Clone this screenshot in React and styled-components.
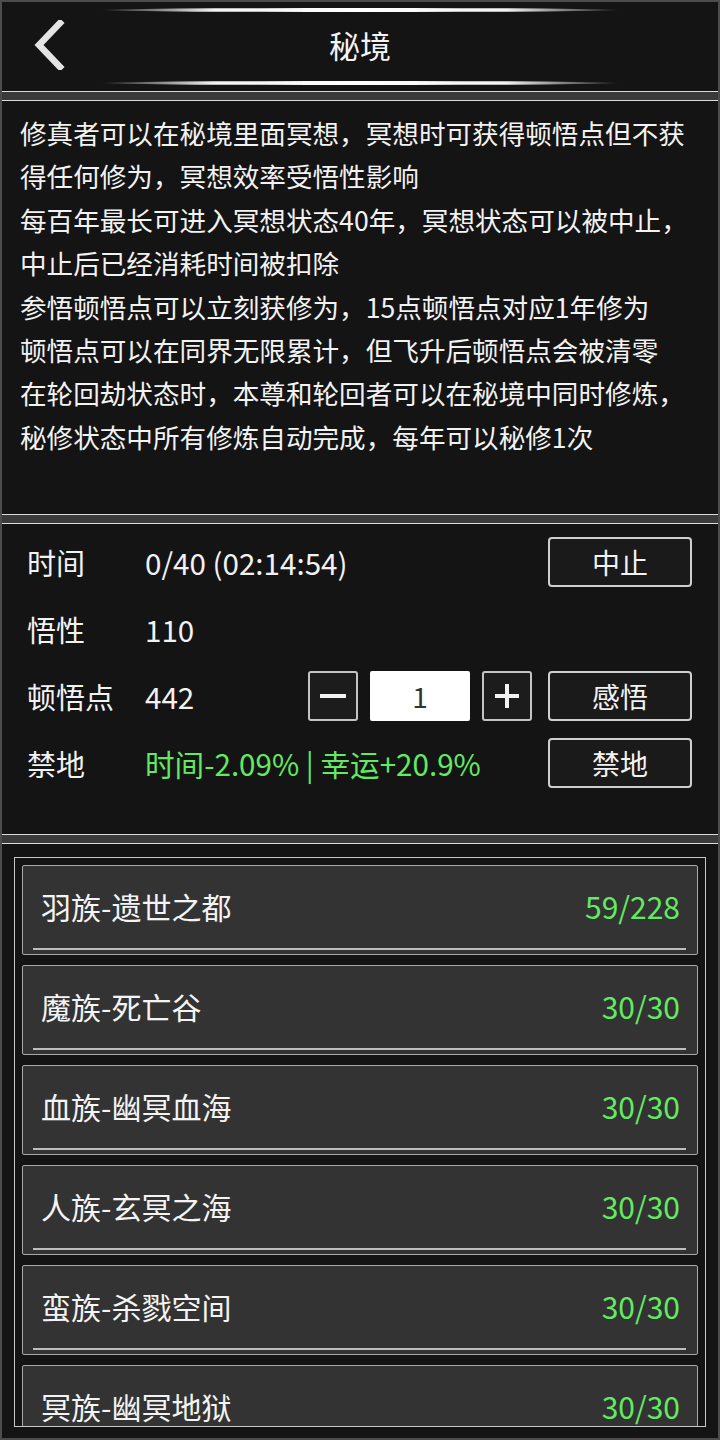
import React from "react";
import styled, { createGlobalStyle } from "styled-components";

const GlobalStyle = createGlobalStyle`
  html, body {
    margin: 0;
    padding: 0;
    background: #141414;
  }
  body {
    font-family: "Noto Sans CJK SC", "Noto Sans", sans-serif;
    color: #f2f2f2;
  }
  * {
    box-sizing: border-box;
  }
`;

const intro = [
  "修真者可以在秘境里面冥想，冥想时可获得顿悟点但不获得任何修为，冥想效率受悟性影响",
  "每百年最长可进入冥想状态40年，冥想状态可以被中止，中止后已经消耗时间被扣除",
  "参悟顿悟点可以立刻获修为，15点顿悟点对应1年修为",
  "顿悟点可以在同界无限累计，但飞升后顿悟点会被清零",
  "在轮回劫状态时，本尊和轮回者可以在秘境中同时修炼，秘修状态中所有修炼自动完成，每年可以秘修1次",
];

const realms = [
  { name: "羽族-遗世之都", count: "59/228" },
  { name: "魔族-死亡谷", count: "30/30" },
  { name: "血族-幽冥血海", count: "30/30" },
  { name: "人族-玄冥之海", count: "30/30" },
  { name: "蛮族-杀戮空间", count: "30/30" },
  { name: "冥族-幽冥地狱", count: "30/30" },
];

function App() {
  return (
    <>
      <GlobalStyle />
      <Page>
        <Header>
          <Glow />
          <TitleRow>
            <BackButton aria-label="返回">
              <svg width="36" height="50" viewBox="0 0 36 50">
                <path
                  d="M30 3 L9 25 L30 47"
                  fill="none"
                  stroke="#e4e4e4"
                  strokeWidth="6.5"
                  strokeLinecap="square"
                />
              </svg>
            </BackButton>
            <Title>秘境</Title>
            <span />
          </TitleRow>
          <Glow />
        </Header>

        <Divider />

        <IntroPanel>
          {intro.map((line) => (
            <p key={line}>{line}</p>
          ))}
        </IntroPanel>

        <Divider />

        <StatsPanel>
          <StatRow>
            <Label>时间</Label>
            <Value>0/40 (02:14:54)</Value>
            <ActionButton>中止</ActionButton>
          </StatRow>
          <StatRow>
            <Label>悟性</Label>
            <Value>110</Value>
          </StatRow>
          <StatRow>
            <Label>顿悟点</Label>
            <Value>442</Value>
            <Stepper>
              <StepButton aria-label="减少">
                <svg width="30" height="30" viewBox="0 0 30 30">
                  <rect x="2" y="13" width="26" height="4" fill="#f2f2f2" />
                </svg>
              </StepButton>
              <Amount>1</Amount>
              <StepButton aria-label="增加">
                <svg width="30" height="30" viewBox="0 0 30 30">
                  <rect x="3" y="13" width="24" height="4" fill="#f2f2f2" />
                  <rect x="13" y="3" width="4" height="24" fill="#f2f2f2" />
                </svg>
              </StepButton>
            </Stepper>
            <ActionButton>感悟</ActionButton>
          </StatRow>
          <StatRow>
            <Label>禁地</Label>
            <Value $green>时间-2.09% | 幸运+20.9%</Value>
            <ActionButton>禁地</ActionButton>
          </StatRow>
        </StatsPanel>

        <Divider />

        <ListPanel>
          <ListFrame>
            {realms.map((r) => (
              <RealmItem key={r.name}>
                <RealmName>{r.name}</RealmName>
                <RealmCount>{r.count}</RealmCount>
              </RealmItem>
            ))}
          </ListFrame>
        </ListPanel>
      </Page>
    </>
  );
}

const Page = styled.div`
  height: 1440px;
  border: 2px solid #4c4c4c;
  display: flex;
  flex-direction: column;
  background: #141414;
  overflow: hidden;
`;

const Header = styled.header`
  height: 89px;
  flex-shrink: 0;
  display: flex;
  flex-direction: column;
  align-items: center;
  padding-top: 6px;
`;

const Glow = styled.div`
  width: 520px;
  height: 4px;
  border-radius: 50%;
  background: linear-gradient(
    90deg,
    rgba(255, 255, 255, 0) 0%,
    rgba(200, 200, 200, 0.35) 6%,
    rgba(255, 255, 255, 0.95) 22%,
    #ffffff 50%,
    rgba(255, 255, 255, 0.95) 78%,
    rgba(200, 200, 200, 0.35) 94%,
    rgba(255, 255, 255, 0) 100%
  );
`;

const TitleRow = styled.div`
  align-self: stretch;
  height: 69px;
  padding-bottom: 4px;
  display: grid;
  grid-template-columns: 1fr auto 1fr;
  align-items: center;
`;

const BackButton = styled.button`
  justify-self: start;
  margin-left: 28px;
  padding: 0;
  border: none;
  background: none;
  display: flex;
  cursor: pointer;
`;

const Title = styled.h1`
  margin: 0;
  font-size: 31px;
  font-weight: 400;
  color: #f4f4f4;
`;

const Divider = styled.div`
  height: 10px;
  flex-shrink: 0;
  background: #3a3a3a;
  border-top: 1px solid #dcdcdc;
  border-bottom: 1px solid #dcdcdc;
`;

const IntroPanel = styled.section`
  height: 413px;
  flex-shrink: 0;
  padding: 10px 16px 0 18px;
  font-size: 26.6px;
  line-height: 43.4px;
  color: #f2f2f2;

  p {
    margin: 0;
  }
`;

const StatsPanel = styled.section`
  height: 310px;
  flex-shrink: 0;
  padding: 13px 26px 0 25px;
  display: flex;
  flex-direction: column;
  gap: 17px;
`;

const StatRow = styled.div`
  height: 50px;
  display: flex;
  align-items: center;
  gap: 16px;
`;

const Label = styled.span`
  width: 102px;
  font-size: 29px;
  color: #f2f2f2;
`;

const Value = styled.span`
  flex: 1;
  font-size: 29.6px;
  white-space: nowrap;
  color: ${(p) => (p.$green ? "#62ea62" : "#f2f2f2")};
`;

const ActionButton = styled.button`
  width: 144px;
  height: 50px;
  flex-shrink: 0;
  margin-left: auto;
  border: 2px solid #cfcfcf;
  border-radius: 4px;
  background: #1a1a1a;
  color: #f2f2f2;
  font-family: inherit;
  font-size: 28px;
  cursor: pointer;
`;

const Stepper = styled.div`
  display: flex;
  gap: 12px;
`;

const StepButton = styled.button`
  width: 50px;
  height: 50px;
  padding: 0;
  border: 2px solid #c4c4c4;
  border-radius: 3px;
  background: #1c1c1c;
  display: flex;
  align-items: center;
  justify-content: center;
  cursor: pointer;
`;

const Amount = styled.div`
  width: 100px;
  height: 50px;
  background: #ffffff;
  border-radius: 2px;
  color: #333;
  font-size: 28px;
  display: flex;
  align-items: center;
  justify-content: center;
`;

const ListPanel = styled.section`
  flex: 1;
  min-height: 0;
  padding: 13px 12px 11px 12px;
  display: flex;
`;

const ListFrame = styled.div`
  flex: 1;
  border: 1px solid #c8c8c8;
  padding: 7px;
  display: flex;
  flex-direction: column;
  gap: 10px;
  overflow: hidden;
`;

const RealmItem = styled.div`
  height: 90px;
  flex-shrink: 0;
  position: relative;
  border: 1px solid #a8a8a8;
  border-radius: 2px;
  background: #333333;
  display: flex;
  align-items: center;
  justify-content: space-between;
  padding: 0 17px 8px 18px;

  &::after {
    content: "";
    position: absolute;
    left: 10px;
    right: 11px;
    bottom: 4px;
    height: 2px;
    background: #bdbdbd;
  }
`;

const RealmName = styled.span`
  font-size: 30px;
  color: #f4f4f4;
`;

const RealmCount = styled.span`
  font-size: 30px;
  color: #62ea62;
`;

export default App;
